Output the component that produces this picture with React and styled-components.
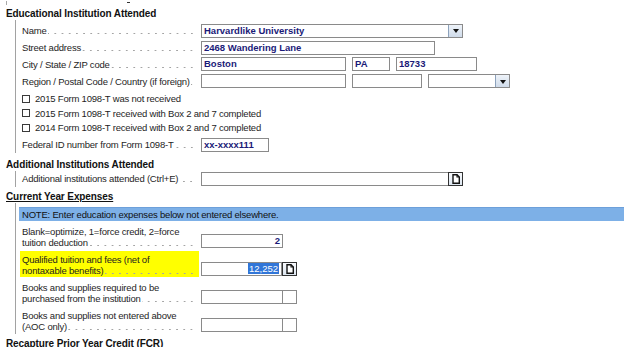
import React from 'react';
import styled, { createGlobalStyle } from 'styled-components';

const GlobalStyle = createGlobalStyle`
  html, body {
    margin: 0;
    padding: 0;
    background: #fff;
  }
  body {
    width: 624px;
    height: 357px;
    overflow: hidden;
    font-family: "Liberation Sans", Arial, sans-serif;
  }
`;

const Page = styled.div`
  width: 624px;
  height: 357px;
  overflow: hidden;
  background: #fff;
  color: #1e1e1e;
  font-size: 9.5px;
  letter-spacing: -0.2px;
`;

const Remnant = styled.div`
  height: 7px;
  display: flex;
  align-items: flex-start;
  padding-left: 6px;

  span:first-child {
    width: 1px;
    height: 4px;
    margin-top: 1px;
    background: #a8a8a8;
  }
  span:last-child {
    width: 3px;
    height: 1px;
    margin-top: 2px;
    margin-left: 120px;
    background: #333;
  }
`;

const Title = styled.div`
  padding-left: 6px;
  height: 13px;
  line-height: 13px;
  font-size: 10px;
  font-weight: bold;
  letter-spacing: -0.1px;
  color: #111;
  margin-top: ${(p) => p.$top || 0}px;
  text-decoration: ${(p) => (p.$underline ? 'underline' : 'none')};
  text-underline-offset: 1px;
`;

const ClipTitle = styled.div`
  height: 10px;
  overflow: hidden;
  margin-top: 3px;
`;

const Group = styled.div`
  margin-left: 15px;
  border-left: 1px solid #a2a2a2;
  padding-left: 4px;
  padding-top: ${(p) => p.$top || 0}px;
`;

const Row = styled.div`
  display: flex;
  align-items: ${(p) => (p.$tall ? 'flex-end' : 'center')};
  height: ${(p) => p.$h || 16.7}px;
  margin-top: ${(p) => p.$top || 0}px;
  padding-bottom: ${(p) => (p.$tall ? 2 : 0)}px;
  box-sizing: border-box;
`;

const Label = styled.div`
  width: 179px;
  flex: none;
  box-sizing: border-box;
  padding: 0 4px ${(p) => (p.$hl ? 1 : 0)}px 2px;
  display: flex;
  flex-direction: column;
  line-height: 11px;
  white-space: nowrap;
  background: ${(p) => (p.$hl ? '#ffff00' : 'transparent')};
  ${(p) => p.$hl && 'height: 26px; justify-content: flex-end; margin-bottom: -1px;'}
`;

const Line = styled.div`
  display: flex;
  align-items: flex-end;
`;

const Leader = styled.span`
  flex: 1;
  height: 3px;
  margin-bottom: 1px;
  margin-left: 1px;
  background-image: radial-gradient(circle, #a4a4a4 0.5px, transparent 0.9px);
  background-size: 7.2px 3px;
  background-position: right bottom;
  background-repeat: repeat-x;
`;

const CheckRow = styled.div`
  display: flex;
  align-items: center;
  height: 14.5px;
  padding-left: 2px;
  margin-top: ${(p) => p.$top || 0}px;
`;

const Check = styled.span`
  width: 8px;
  height: 8px;
  border: 1px solid #3a3a3a;
  box-sizing: border-box;
  margin-right: 5px;
  background: #fff;
`;

const Fields = styled.div`
  display: flex;
  align-items: center;
  gap: 6px;
  margin-left: 2px;
`;

const Field = styled.div`
  display: flex;
  align-items: center;
`;

const Box = styled.div`
  width: ${(p) => p.$w}px;
  height: 14px;
  border: 1px solid #8a8a8a;
  box-sizing: border-box;
  display: flex;
  align-items: stretch;
  background: #fff;
`;

const Value = styled.span`
  flex: 1;
  padding: 0 2px;
  line-height: 12px;
  font-weight: bold;
  color: #1a1a78;
  white-space: nowrap;
  overflow: hidden;
  letter-spacing: 0;
  text-align: ${(p) => p.$align || 'left'};
`;

const Selected = styled.span`
  background: #3176d8;
  color: #fff;
  font-weight: normal;
  padding: 0 1px;
`;

const DropBtn = styled.span`
  width: 13px;
  flex: none;
  border-left: 1px solid #8da2bc;
  background: linear-gradient(#eef3f9, #cfdbea);
  display: flex;
  align-items: center;
  justify-content: center;

  &::after {
    content: '';
    border-left: 3.5px solid transparent;
    border-right: 3.5px solid transparent;
    border-top: 4px solid #111;
    margin-top: 1px;
  }
`;

const SideCell = styled.span`
  width: 15px;
  height: 14px;
  flex: none;
  box-sizing: border-box;
  margin-left: ${(p) => (p.$doc ? 0 : -1)}px;
  border: 1px solid ${(p) => (p.$doc ? '#333' : '#8a8a8a')};
  background: ${(p) => (p.$doc ? 'linear-gradient(#f7f9fc, #dde6f0)' : '#fff')};
  display: flex;
  align-items: center;
  justify-content: center;
`;

const NoteBar = styled.div`
  margin-left: -1px;
  height: 14px;
  line-height: 14px;
  padding-left: 3px;
  background: #7db0e7;
  border-top: 1px solid #6da0da;
  box-sizing: border-box;
  margin-bottom: 1px;
  color: #111;
`;

const DocIcon = () => (
  <svg width="8" height="10" viewBox="0 0 8 10">
    <path d="M1 0.7 H5 L7.3 3 V9.3 H1 Z" fill="#fff" stroke="#111" strokeWidth="1.4" />
    <path d="M5 0.7 V3 H7.3" fill="none" stroke="#111" strokeWidth="1.1" />
  </svg>
);

const LabelText = ({ lines, hl }) => (
  <Label $hl={hl}>
    {lines.slice(0, -1).map((l) => (
      <Line key={l}>{l}</Line>
    ))}
    <Line>
      {lines[lines.length - 1]}
      <Leader />
    </Line>
  </Label>
);

const checks = [
  '2015 Form 1098-T was not received',
  '2015 Form 1098-T received with Box 2 and 7 completed',
  '2014 Form 1098-T received with Box 2 and 7 completed',
];

export default function App() {
  return (
    <Page>
      <GlobalStyle />
      <Remnant>
        <span />
        <span />
      </Remnant>

      <Title>Educational Institution Attended</Title>
      <Group $top={2.6}>
        <Row>
          <LabelText lines={['Name']} />
          <Fields>
            <Box $w={262}>
              <Value>Harvardlike University</Value>
              <DropBtn />
            </Box>
          </Fields>
        </Row>
        <Row>
          <LabelText lines={['Street address']} />
          <Fields>
            <Box $w={234}>
              <Value>2468 Wandering Lane</Value>
            </Box>
          </Fields>
        </Row>
        <Row>
          <LabelText lines={['City / State / ZIP code']} />
          <Fields>
            <Box $w={145}>
              <Value>Boston</Value>
            </Box>
            <Box $w={38}>
              <Value>PA</Value>
            </Box>
            <Box $w={81}>
              <Value>18733</Value>
            </Box>
          </Fields>
        </Row>
        <Row>
          <LabelText lines={['Region / Postal Code / Country (if foreign)']} />
          <Fields>
            <Box $w={145} />
            <Box $w={70} />
            <Box $w={82}>
              <Value />
              <DropBtn />
            </Box>
          </Fields>
        </Row>
        {checks.map((c, i) => (
          <CheckRow key={c} $top={i === 0 ? 2 : 0}>
            <Check />
            {c}
          </CheckRow>
        ))}
        <Row $top={1.5}>
          <LabelText lines={['Federal ID number from Form 1098-T']} />
          <Fields>
            <Box $w={68}>
              <Value>xx-xxxx111</Value>
            </Box>
          </Fields>
        </Row>
      </Group>

      <Title $top={4.5}>Additional Institutions Attended</Title>
      <Group>
        <Row>
          <LabelText lines={['Additional institutions attended (Ctrl+E)']} />
          <Fields>
            <Field>
              <Box $w={248} />
              <SideCell $doc style={{ marginLeft: -1 }}>
                <DocIcon />
              </SideCell>
            </Field>
          </Fields>
        </Row>
      </Group>

      <Title $top={3.2} $underline>
        Current Year Expenses
      </Title>
      <Group $top={3.5}>
        <NoteBar>NOTE: Enter education expenses below not entered elsewhere.</NoteBar>
        <Row $tall $h={28}>
          <LabelText lines={['Blank=optimize, 1=force credit, 2=force', 'tuition deduction']} />
          <Fields>
            <Box $w={82}>
              <Value $align="right">2</Value>
            </Box>
          </Fields>
        </Row>
        <Row $tall $h={28}>
          <LabelText hl lines={['Qualified tuition and fees (net of', 'nontaxable benefits)']} />
          <Fields>
            <Field>
              <Box $w={81}>
                <Value $align="right">
                  <Selected>12,252</Selected>
                </Value>
              </Box>
              <SideCell $doc>
                <DocIcon />
              </SideCell>
            </Field>
          </Fields>
        </Row>
        <Row $tall $h={28}>
          <LabelText lines={['Books and supplies required to be', 'purchased from the institution']} />
          <Fields>
            <Field>
              <Box $w={82} />
              <SideCell />
            </Field>
          </Fields>
        </Row>
        <Row $tall $h={28}>
          <LabelText lines={['Books and supplies not entered above', '(AOC only)']} />
          <Fields>
            <Field>
              <Box $w={82} />
              <SideCell />
            </Field>
          </Fields>
        </Row>
      </Group>

      <ClipTitle>
        <Title>Recapture Prior Year Credit (FCR)</Title>
      </ClipTitle>
    </Page>
  );
}
